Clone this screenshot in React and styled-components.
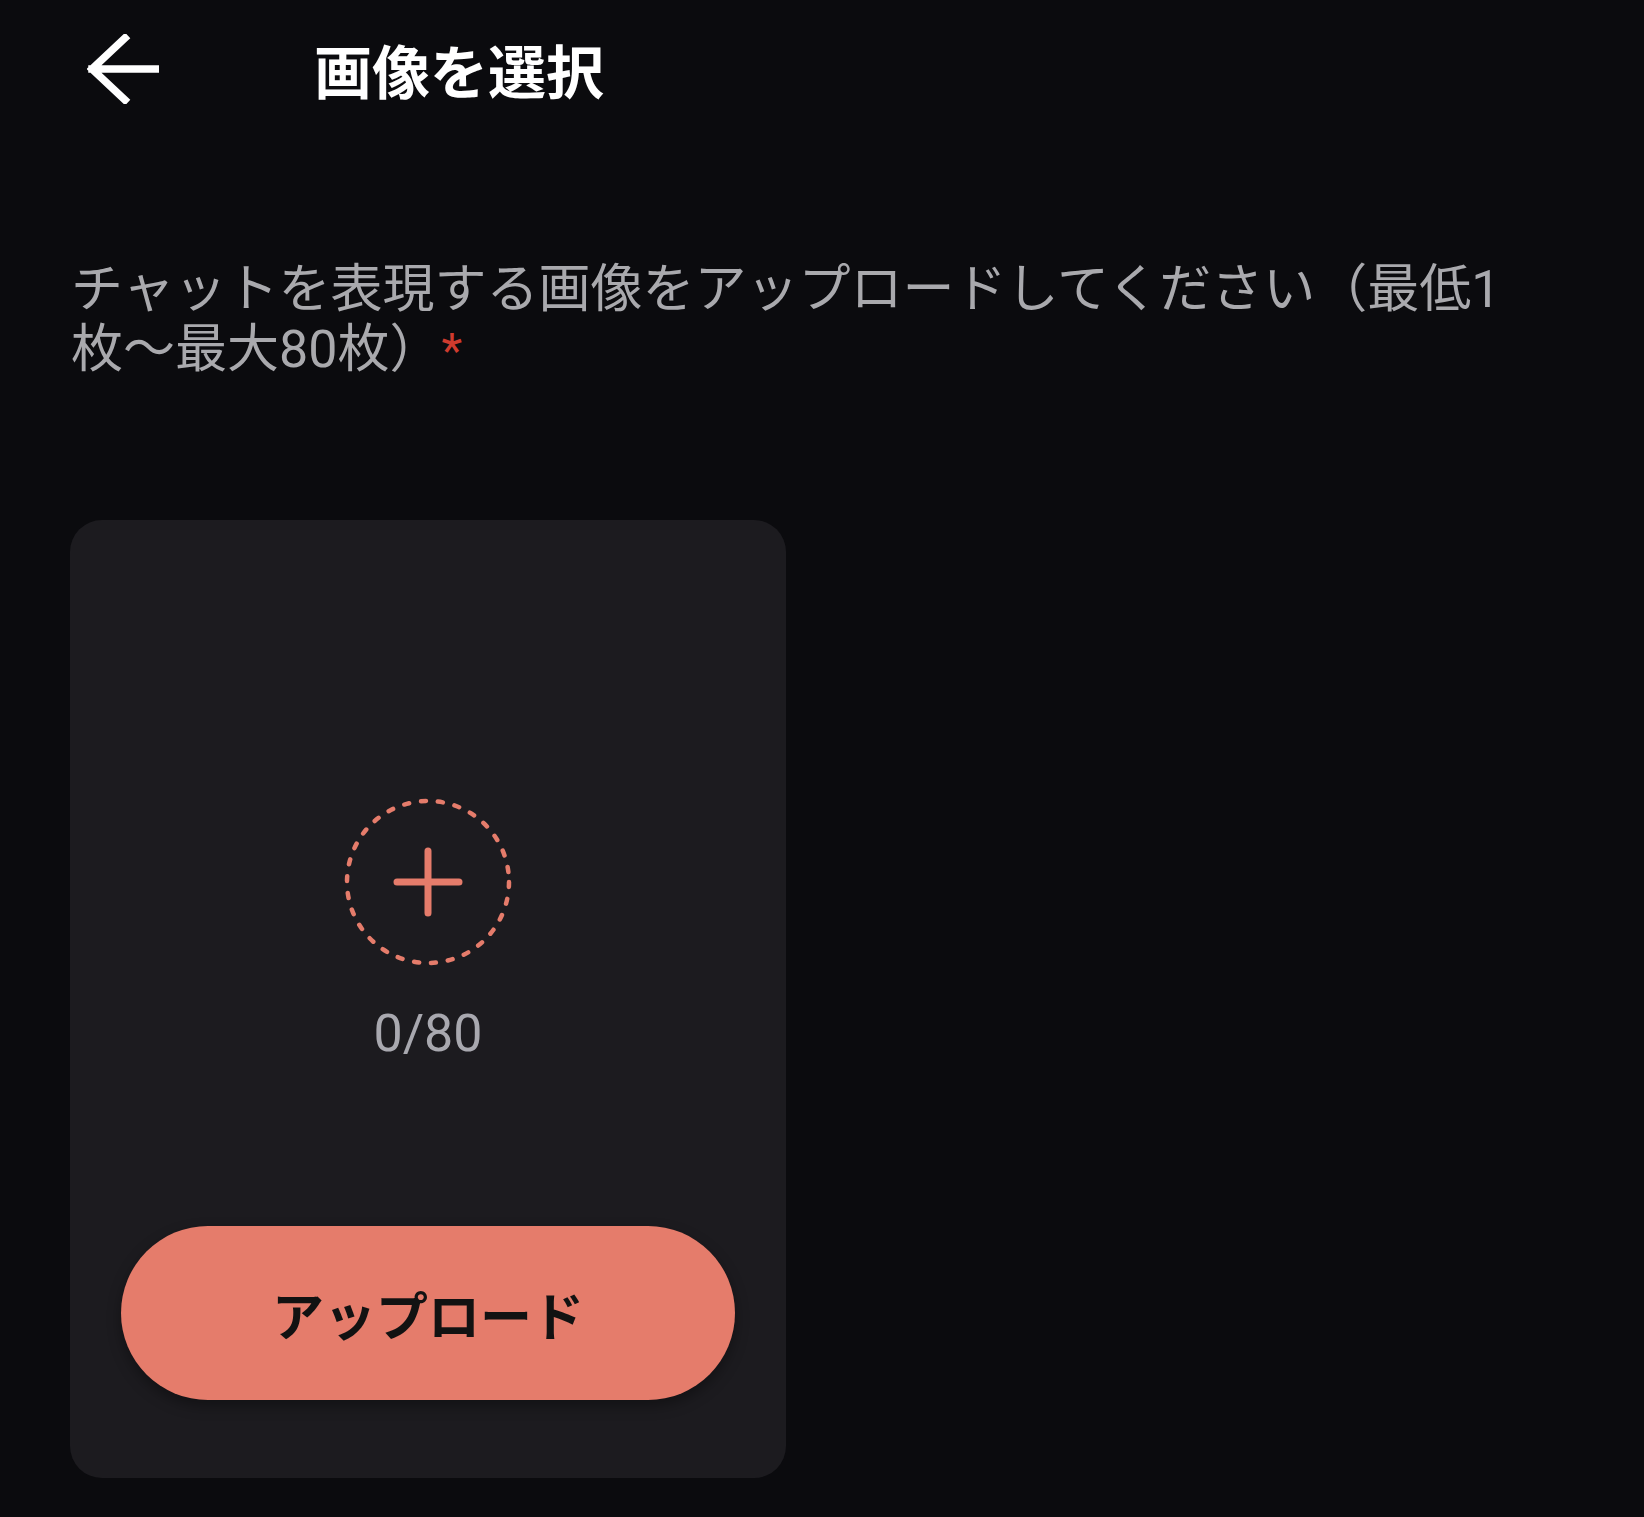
import React from "react";
import styled, { createGlobalStyle } from "styled-components";

const GlobalStyle = createGlobalStyle`
  html, body {
    margin: 0;
    padding: 0;
    background: #0b0b0e;
  }
  body {
    font-family: "Roboto", "Noto Sans CJK JP", sans-serif;
    color: #ffffff;
  }
`;

const Page = styled.div`
  min-height: 1517px;
  background: #0b0b0e;
  display: flex;
  flex-direction: column;
`;

const Header = styled.header`
  height: 138px;
  display: flex;
  align-items: center;
  padding-left: 87px;
`;

const BackButton = styled.button`
  width: 72px;
  height: 70px;
  padding: 0;
  border: none;
  background: transparent;
  display: flex;
  align-items: center;
  justify-content: center;
  cursor: pointer;
`;

const Title = styled.h1`
  margin: 0 0 0 155px;
  font-family: "Noto Sans CJK JP", sans-serif;
  font-weight: 700;
  font-size: 58px;
  line-height: 1;
  color: #ffffff;
`;

const Content = styled.main`
  padding: 122px 70px 0 71px;
  display: flex;
  flex-direction: column;
`;

const Description = styled.p`
  margin: 0;
  max-width: 1460px;
  font-family: "Roboto", "Noto Sans CJK JP", sans-serif;
  font-size: 52px;
  line-height: 60px;
  color: #a9a9ad;
`;

const Required = styled.span`
  color: #cf3b2e;
  font-size: 48px;
`;

const Card = styled.section`
  margin-top: 139px;
  margin-left: -1px;
  width: 716px;
  height: 958px;
  box-sizing: border-box;
  background: #1c1b1f;
  border-radius: 32px;
  display: flex;
  flex-direction: column;
  align-items: center;
  padding: 278px 51px 78px;
`;

const DropZone = styled.div`
  display: flex;
  flex-direction: column;
  align-items: center;
  gap: 42px;
`;

const AddCircle = styled.div`
  width: 168px;
  height: 168px;
  display: flex;
  align-items: center;
  justify-content: center;
`;

const Count = styled.div`
  font-family: "Roboto", sans-serif;
  font-size: 52px;
  line-height: 1;
  color: #a8a8af;
`;

const UploadButton = styled.button`
  margin-top: auto;
  width: 614px;
  height: 174px;
  border: none;
  border-radius: 87px;
  background: #e57c6b;
  box-shadow: 0 6px 14px rgba(0, 0, 0, 0.35);
  font-family: "Noto Sans CJK JP", sans-serif;
  font-weight: 700;
  font-size: 52px;
  color: #121212;
  cursor: pointer;
`;

const ArrowIcon = () => (
  <svg width="72" height="70" viewBox="0 0 72 70" fill="none">
    <path
      d="M5 35 H69 M38 4 L5 35 L38 66"
      stroke="#ffffff"
      strokeWidth="7.5"
      strokeLinecap="square"
      strokeLinejoin="miter"
    />
  </svg>
);

const DashedPlus = () => (
  <svg width="168" height="168" viewBox="0 0 168 168" fill="none">
    <circle
      cx="84"
      cy="84"
      r="81"
      stroke="#e57c6b"
      strokeWidth="4.5"
      strokeDasharray="5 12"
      strokeLinecap="round"
    />
    <path
      d="M84 53 V115 M53 84 H115"
      stroke="#e57c6b"
      strokeWidth="7"
      strokeLinecap="round"
    />
  </svg>
);

export default function App() {
  return (
    <>
      <GlobalStyle />
      <Page>
        <Header>
          <BackButton aria-label="戻る">
            <ArrowIcon />
          </BackButton>
          <Title>画像を選択</Title>
        </Header>
        <Content>
          <Description>
            チャットを表現する画像をアップロードしてください（最低1枚～最大80枚）
            <Required>*</Required>
          </Description>
          <Card>
            <DropZone>
              <AddCircle>
                <DashedPlus />
              </AddCircle>
              <Count>0/80</Count>
            </DropZone>
            <UploadButton>アップロード</UploadButton>
          </Card>
        </Content>
      </Page>
    </>
  );
}
